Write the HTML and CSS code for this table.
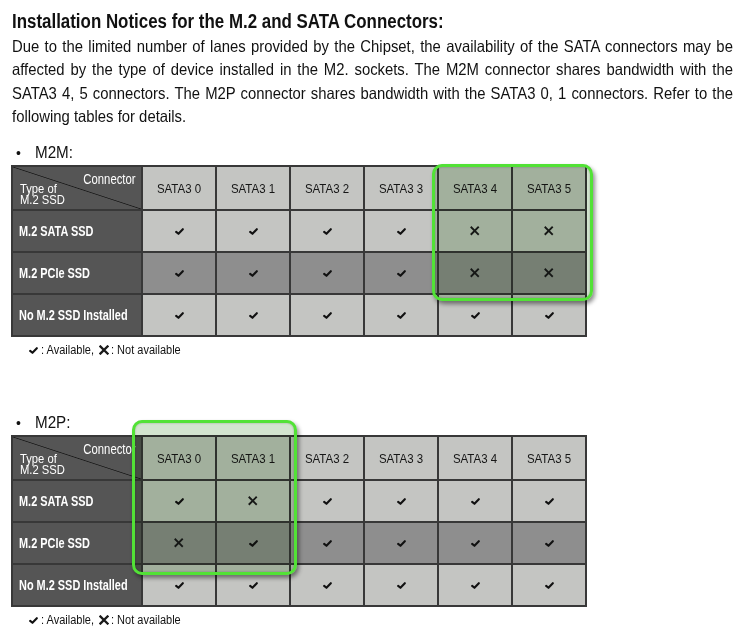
FILE: index.html
```html
<!DOCTYPE html>
<html>
<head>
<meta charset="utf-8">
<link rel="stylesheet" href="styles.css">
</head>
<body>
<div class="page">
  <h1 class="title"><span class="title-text">Installation Notices for the M.2 and SATA Connectors:</span></h1>
  <div class="intro">
    <div class="intro-inner">
      <span class="line">Due to the limited number of lanes provided by the Chipset, the availability of the SATA connectors may be</span>
      <span class="line">affected by the type of device installed in the M2. sockets. The M2M connector shares bandwidth with the</span>
      <span class="line">SATA3 4, 5 connectors. The M2P connector shares bandwidth with the SATA3 0, 1 connectors. Refer to the</span>
      <span class="line last">following tables for details.</span>
    </div>
  </div>

  <section class="block block-m2m">
    <div class="label"><span class="bullet">•</span><span class="label-text">M2M:</span></div>
    <div class="table-wrap">
      <div class="grid">
        <div class="cell corner"><span class="c-conn">Connector</span><span class="c-type"><span class="c-line">Type of</span><span class="c-line">M.2 SSD</span></span></div>
        <div class="cell head"><span class="sq">SATA3 0</span></div><div class="cell head"><span class="sq">SATA3 1</span></div><div class="cell head"><span class="sq">SATA3 2</span></div><div class="cell head"><span class="sq">SATA3 3</span></div><div class="cell head"><span class="sq">SATA3 4</span></div><div class="cell head"><span class="sq">SATA3 5</span></div>

        <div class="cell rowhead"><span class="rq">M.2 SATA SSD</span></div>
        <div class="cell lt"><svg class="ok" viewBox="0 0 10 8"><path d="M1.2 4.4 L3.8 6.6 L8.8 1.4" /></svg></div>
        <div class="cell lt"><svg class="ok" viewBox="0 0 10 8"><path d="M1.2 4.4 L3.8 6.6 L8.8 1.4" /></svg></div>
        <div class="cell lt"><svg class="ok" viewBox="0 0 10 8"><path d="M1.2 4.4 L3.8 6.6 L8.8 1.4" /></svg></div>
        <div class="cell lt"><svg class="ok" viewBox="0 0 10 8"><path d="M1.2 4.4 L3.8 6.6 L8.8 1.4" /></svg></div>
        <div class="cell lt"><svg class="no" viewBox="0 0 10 10"><path d="M1.5 1.5 L8.5 8.5 M8.5 1.5 L1.5 8.5" /></svg></div>
        <div class="cell lt"><svg class="no" viewBox="0 0 10 10"><path d="M1.5 1.5 L8.5 8.5 M8.5 1.5 L1.5 8.5" /></svg></div>

        <div class="cell rowhead"><span class="rq">M.2 PCIe SSD</span></div>
        <div class="cell dk"><svg class="ok" viewBox="0 0 10 8"><path d="M1.2 4.4 L3.8 6.6 L8.8 1.4" /></svg></div>
        <div class="cell dk"><svg class="ok" viewBox="0 0 10 8"><path d="M1.2 4.4 L3.8 6.6 L8.8 1.4" /></svg></div>
        <div class="cell dk"><svg class="ok" viewBox="0 0 10 8"><path d="M1.2 4.4 L3.8 6.6 L8.8 1.4" /></svg></div>
        <div class="cell dk"><svg class="ok" viewBox="0 0 10 8"><path d="M1.2 4.4 L3.8 6.6 L8.8 1.4" /></svg></div>
        <div class="cell dk"><svg class="no" viewBox="0 0 10 10"><path d="M1.5 1.5 L8.5 8.5 M8.5 1.5 L1.5 8.5" /></svg></div>
        <div class="cell dk"><svg class="no" viewBox="0 0 10 10"><path d="M1.5 1.5 L8.5 8.5 M8.5 1.5 L1.5 8.5" /></svg></div>

        <div class="cell rowhead"><span class="rq">No M.2 SSD Installed</span></div>
        <div class="cell lt"><svg class="ok" viewBox="0 0 10 8"><path d="M1.2 4.4 L3.8 6.6 L8.8 1.4" /></svg></div>
        <div class="cell lt"><svg class="ok" viewBox="0 0 10 8"><path d="M1.2 4.4 L3.8 6.6 L8.8 1.4" /></svg></div>
        <div class="cell lt"><svg class="ok" viewBox="0 0 10 8"><path d="M1.2 4.4 L3.8 6.6 L8.8 1.4" /></svg></div>
        <div class="cell lt"><svg class="ok" viewBox="0 0 10 8"><path d="M1.2 4.4 L3.8 6.6 L8.8 1.4" /></svg></div>
        <div class="cell lt"><svg class="ok" viewBox="0 0 10 8"><path d="M1.2 4.4 L3.8 6.6 L8.8 1.4" /></svg></div>
        <div class="cell lt"><svg class="ok" viewBox="0 0 10 8"><path d="M1.2 4.4 L3.8 6.6 L8.8 1.4" /></svg></div>
      </div>
      <div class="hl-fill hl-m2m"></div>
      <div class="hl-frame hl-m2m"></div>
    </div>
    <div class="legend"><svg class="ok lg" viewBox="0 0 10 8"><path d="M1.2 4.4 L3.8 6.6 L8.8 1.4" /></svg><span class="lq">: Available, </span><svg class="no lg" viewBox="0 0 10 10"><path d="M1.5 1.5 L8.5 8.5 M8.5 1.5 L1.5 8.5" /></svg><span class="lq">: Not available</span></div>
  </section>

  <section class="block block-m2p">
    <div class="label"><span class="bullet">•</span><span class="label-text">M2P:</span></div>
    <div class="table-wrap">
      <div class="grid">
        <div class="cell corner"><span class="c-conn">Connector</span><span class="c-type"><span class="c-line">Type of</span><span class="c-line">M.2 SSD</span></span></div>
        <div class="cell head"><span class="sq">SATA3 0</span></div><div class="cell head"><span class="sq">SATA3 1</span></div><div class="cell head"><span class="sq">SATA3 2</span></div><div class="cell head"><span class="sq">SATA3 3</span></div><div class="cell head"><span class="sq">SATA3 4</span></div><div class="cell head"><span class="sq">SATA3 5</span></div>

        <div class="cell rowhead"><span class="rq">M.2 SATA SSD</span></div>
        <div class="cell lt"><svg class="ok" viewBox="0 0 10 8"><path d="M1.2 4.4 L3.8 6.6 L8.8 1.4" /></svg></div>
        <div class="cell lt"><svg class="no" viewBox="0 0 10 10"><path d="M1.5 1.5 L8.5 8.5 M8.5 1.5 L1.5 8.5" /></svg></div>
        <div class="cell lt"><svg class="ok" viewBox="0 0 10 8"><path d="M1.2 4.4 L3.8 6.6 L8.8 1.4" /></svg></div>
        <div class="cell lt"><svg class="ok" viewBox="0 0 10 8"><path d="M1.2 4.4 L3.8 6.6 L8.8 1.4" /></svg></div>
        <div class="cell lt"><svg class="ok" viewBox="0 0 10 8"><path d="M1.2 4.4 L3.8 6.6 L8.8 1.4" /></svg></div>
        <div class="cell lt"><svg class="ok" viewBox="0 0 10 8"><path d="M1.2 4.4 L3.8 6.6 L8.8 1.4" /></svg></div>

        <div class="cell rowhead"><span class="rq">M.2 PCIe SSD</span></div>
        <div class="cell dk"><svg class="no" viewBox="0 0 10 10"><path d="M1.5 1.5 L8.5 8.5 M8.5 1.5 L1.5 8.5" /></svg></div>
        <div class="cell dk"><svg class="ok" viewBox="0 0 10 8"><path d="M1.2 4.4 L3.8 6.6 L8.8 1.4" /></svg></div>
        <div class="cell dk"><svg class="ok" viewBox="0 0 10 8"><path d="M1.2 4.4 L3.8 6.6 L8.8 1.4" /></svg></div>
        <div class="cell dk"><svg class="ok" viewBox="0 0 10 8"><path d="M1.2 4.4 L3.8 6.6 L8.8 1.4" /></svg></div>
        <div class="cell dk"><svg class="ok" viewBox="0 0 10 8"><path d="M1.2 4.4 L3.8 6.6 L8.8 1.4" /></svg></div>
        <div class="cell dk"><svg class="ok" viewBox="0 0 10 8"><path d="M1.2 4.4 L3.8 6.6 L8.8 1.4" /></svg></div>

        <div class="cell rowhead"><span class="rq">No M.2 SSD Installed</span></div>
        <div class="cell lt"><svg class="ok" viewBox="0 0 10 8"><path d="M1.2 4.4 L3.8 6.6 L8.8 1.4" /></svg></div>
        <div class="cell lt"><svg class="ok" viewBox="0 0 10 8"><path d="M1.2 4.4 L3.8 6.6 L8.8 1.4" /></svg></div>
        <div class="cell lt"><svg class="ok" viewBox="0 0 10 8"><path d="M1.2 4.4 L3.8 6.6 L8.8 1.4" /></svg></div>
        <div class="cell lt"><svg class="ok" viewBox="0 0 10 8"><path d="M1.2 4.4 L3.8 6.6 L8.8 1.4" /></svg></div>
        <div class="cell lt"><svg class="ok" viewBox="0 0 10 8"><path d="M1.2 4.4 L3.8 6.6 L8.8 1.4" /></svg></div>
        <div class="cell lt"><svg class="ok" viewBox="0 0 10 8"><path d="M1.2 4.4 L3.8 6.6 L8.8 1.4" /></svg></div>
      </div>
      <div class="hl-fill hl-m2p"></div>
      <div class="hl-frame hl-m2p"></div>
    </div>
    <div class="legend"><svg class="ok lg" viewBox="0 0 10 8"><path d="M1.2 4.4 L3.8 6.6 L8.8 1.4" /></svg><span class="lq">: Available, </span><svg class="no lg" viewBox="0 0 10 10"><path d="M1.5 1.5 L8.5 8.5 M8.5 1.5 L1.5 8.5" /></svg><span class="lq">: Not available</span></div>
  </section>
</div>
</body>
</html>
```

FILE: styles.css
```css
html, body {
  margin: 0;
  padding: 0;
  background: #ffffff;
}

body {
  overflow-x: hidden;
}

.page {
  font-family: "Liberation Sans", Arial, sans-serif;
  color: #111;
  padding: 9px 12px 0 12px;
  width: 721px;
}

/* Title: bold condensed look */
.title {
  font-size: 20px;
  font-weight: bold;
  line-height: 24px;
  margin: 0;
  white-space: nowrap;
}

.title-text {
  display: inline-block;
  transform: scaleX(0.845);
  transform-origin: 0 0;
}

/* Intro paragraph: justified condensed text */
.intro {
  margin-top: 2px;
  width: 721px;
  height: 93px;
}

.intro-inner {
  width: 801px;
  font-size: 16.5px;
  line-height: 23.3px;
  transform: scaleX(0.9);
  transform-origin: 0 0;
}

.intro .line {
  display: block;
  white-space: nowrap;
  text-align: justify;
  text-align-last: justify;
}

.intro .line.last {
  text-align-last: left;
}

.block-m2m {
  margin-top: 14px;
}

.block-m2p {
  margin-top: 55px;
}

.label {
  font-size: 16px;
  line-height: 20px;
  height: 22px;
  padding-left: 4px;
  display: flex;
  align-items: center;
}

.bullet {
  width: 19px;
  font-size: 14px;
}

.label-text {
  display: inline-block;
  transform: scaleX(0.95);
  transform-origin: 0 50%;
}

.table-wrap {
  position: relative;
  width: 576px;
  margin-top: 1px;
  margin-left: -1px;
}

.grid {
  display: grid;
  grid-template-columns: 128px repeat(6, 72px);
  grid-template-rows: 42px 40px 40px 40px;
  gap: 2px;
  padding: 2px;
  background: #383838;
}

.cell {
  display: flex;
  align-items: center;
  justify-content: center;
  font-size: 13.5px;
  white-space: nowrap;
}

.sq {
  display: inline-block;
  transform: scaleX(0.85);
}

.head {
  background: #c4c5c2;
  color: #161616;
}

.lt {
  background: #c4c5c2;
}

.dk {
  background: #8e8e8e;
}

.rowhead {
  background: #555555;
  color: #ffffff;
  font-weight: bold;
  font-size: 14px;
  justify-content: flex-start;
  padding-left: 6px;
}

.rq {
  display: inline-block;
  transform: scaleX(0.78);
  transform-origin: 0 50%;
}

.corner {
  position: relative;
  background: linear-gradient(to top right, #555555 calc(50% - 0.8px), #1c1c1c 50%, #555555 calc(50% + 0.8px));
  color: #ffffff;
  display: block;
  font-size: 14px;
}

.c-conn {
  position: absolute;
  top: 6px;
  right: 5px;
  line-height: 12px;
  transform: scaleX(0.81);
  transform-origin: 100% 0;
}

.c-type {
  position: absolute;
  left: 7px;
  top: 16px;
  display: flex;
  flex-direction: column;
  font-size: 13.5px;
  transform: scaleX(0.83);
  transform-origin: 0 0;
}

.c-line {
  display: block;
  height: 11px;
  line-height: 11px;
}

.ok {
  width: 9px;
  height: 7px;
  fill: none;
  stroke: #111;
  stroke-width: 2.4;
  stroke-linecap: round;
  stroke-linejoin: round;
}

.no {
  width: 9.5px;
  height: 9.5px;
  fill: none;
  stroke: #1a1a1a;
  stroke-width: 2;
  stroke-linecap: square;
}

.hl-fill,
.hl-frame {
  position: absolute;
  border-radius: 10px;
  box-sizing: border-box;
}

.hl-fill {
  background: #d3e4cf;
  mix-blend-mode: multiply;
}

.hl-frame {
  border: 3px solid #52e236;
  box-shadow: 2px 3px 4px rgba(0, 0, 0, 0.45), inset 0 0 2px rgba(0, 0, 0, 0.3);
}

.hl-m2m {
  left: 421px;
  top: -1px;
  width: 161px;
  height: 137px;
}

.hl-m2p {
  left: 121px;
  top: -15px;
  width: 165px;
  height: 155px;
}

.legend {
  font-size: 12.5px;
  line-height: 14px;
  padding: 6px 0 0 17px;
  display: flex;
  align-items: center;
  white-space: pre;
}

.lq {
  display: inline-block;
  transform: scaleX(0.88);
  transform-origin: 0 50%;
  margin-right: -6px;
}

.legend .lg.ok {
  width: 9px;
  height: 7px;
  margin-right: 3px;
}

.legend .lg.no {
  width: 10px;
  height: 10px;
  margin-right: 2px;
  stroke-width: 2.3;
}
```
